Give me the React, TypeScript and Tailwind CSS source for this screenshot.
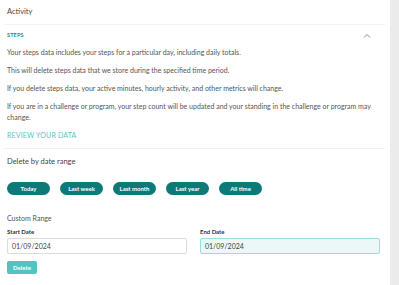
import React from "react";

const ranges = ["Today", "Last week", "Last month", "Last year", "All time"];

const notes = [
  "Your steps data includes your steps for a particular day, including daily totals.",
  "This will delete steps data that we store during the specified time period.",
  "If you delete steps data, your active minutes, hourly activity, and other metrics will change.",
  "If you are in a challenge or program, your step count will be updated and your standing in the challenge or program may change.",
];

const App: React.FC = () => {
  return (
    <div
      className="flex h-[285px] w-[399px] overflow-hidden bg-[#ebebeb]"
      style={{ fontFamily: "Lato, 'Open Sans', sans-serif" }}
    >
      <div className="w-[390px] bg-white">
        {/* header */}
        <div className="mx-[5px] flex h-[25px] items-center border-b border-[#f2f2f2] px-[2px] text-[7.5px] text-[#444]">
          Activity
        </div>

        <div className="mx-[5px] border-b border-[#f0f0f0] px-[2px] pb-[7px]">
          <div className="mt-[5px] flex h-[10px] items-center justify-between">
            <span className="text-[5.5px] font-bold tracking-wide text-[#1d8a8a]">STEPS</span>
            <svg
              width="8"
              height="5"
              viewBox="0 0 8 5"
              fill="none"
              stroke="#8a8a8a"
              strokeWidth="1"
              className="mr-[12px]"
            >
              <path d="M1 4.5L4 1.5L7 4.5" />
            </svg>
          </div>

          {notes.map((n) => (
            <p key={n} className="mt-[7px] pr-[4px] text-[7px] leading-[11px] text-[#555]">
              {n}
            </p>
          ))}

          <div className="mt-[7px] text-[7px] leading-[11px] tracking-wide text-[#5cc4c4]">
            REVIEW YOUR DATA
          </div>
        </div>

        <div className="px-[7px]">
          <div className="mt-[7px] h-[12px] text-[7.5px] leading-[12px] text-[#444]">
            Delete by date range
          </div>

          <div className="mt-[14px] flex gap-[10px]">
            {ranges.map((r) => (
              <button
                key={r}
                className="flex h-[13px] w-[43px] items-center justify-center rounded-full bg-[#0d7a78] text-[6px] font-bold text-white"
              >
                {r}
              </button>
            ))}
          </div>

          <div className="mt-[17px] h-[12px] text-[7px] leading-[12px] text-[#555]">
            Custom Range
          </div>

          <div className="mt-[4px] flex gap-[13px]">
            <div className="w-[180px]">
              <div className="h-[8px] text-[6px] font-bold leading-[8px] text-[#333]">Start Date</div>
              <div className="mt-[2px] flex h-[16px] items-center rounded-[2px] border border-[#dcdcdc] bg-white px-[4px] text-[7px] text-[#444]">
                01/09/2024
              </div>
            </div>
            <div className="w-[180px]">
              <div className="h-[8px] text-[6px] font-bold leading-[8px] text-[#333]">End Date</div>
              <div className="mt-[2px] flex h-[16px] items-center rounded-[2px] border border-[#9ddcdc] bg-[#ebf8f7] px-[4px] text-[7px] text-[#444]">
                01/09/2024
              </div>
            </div>
          </div>

          <button className="mt-[7px] flex h-[13px] w-[30px] items-center justify-center rounded-[2px] bg-[#4fc4c1] text-[6px] font-bold text-white">
            Delete
          </button>
        </div>
      </div>
    </div>
  );
};

export default App;
